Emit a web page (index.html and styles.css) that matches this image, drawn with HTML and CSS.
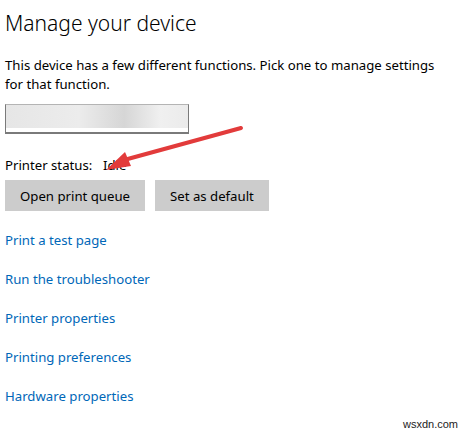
FILE: index.html
```html
<!DOCTYPE html>
<html>
<head>
<meta charset="utf-8">
<link rel="stylesheet" href="styles.css">
</head>
<body>
<div class="page">
  <h1 class="title">Manage your device</h1>
  <p class="desc">This device has a few different functions. Pick one to manage settings for that function.</p>
  <div class="combo"><div class="combo-fill"></div></div>
  <div class="status"><span class="status-label">Printer status:</span><span class="status-value">Idle</span></div>
  <div class="buttons">
    <button class="btn">Open print queue</button>
    <button class="btn">Set as default</button>
  </div>
  <ul class="links">
    <li class="link-item"><a class="link">Print a test page</a></li>
    <li class="link-item"><a class="link">Run the troubleshooter</a></li>
    <li class="link-item"><a class="link">Printer properties</a></li>
    <li class="link-item"><a class="link">Printing preferences</a></li>
    <li class="link-item"><a class="link">Hardware properties</a></li>
  </ul>
  <div class="watermark">wsxdn.com</div>
  <svg class="arrow" width="470" height="440" viewBox="0 0 470 440">
    <line x1="241" y1="128" x2="124" y2="160" stroke="#e23b3b" stroke-width="4" stroke-linecap="round"/>
    <polygon points="106,170 125,152 131,166" fill="#e23b3b"/>
  </svg>
</div>
</body>
</html>
```
FILE: styles.css
```css
html, body { margin: 0; padding: 0; background: #fff; }
.page {
  position: relative;
  width: 470px;
  height: 440px;
  font-family: "Noto Sans", "Open Sans", sans-serif;
  color: #000;
  padding: 0 5px;
  box-sizing: border-box;
}
.title {
  margin: 0;
  padding-top: 9px;
  font-size: 21px;
  font-weight: 300;
  line-height: 28px;
}
.desc {
  margin: 19px 0 0;
  font-size: 13.2px;
  line-height: 19px;
  width: 440px;
}
.combo {
  margin-top: 10px;
  width: 184px;
  height: 30px;
  box-sizing: border-box;
  border: 1px solid #7a7a7a;
  border-top-color: #b4b4b4;
  border-bottom-width: 2px;
  background: #fff;
}
.combo-fill {
  height: 23px;
  background: linear-gradient(90deg, #e6e6e6 0%, #ececec 40%, #d6d6d6 65%, #f0f0f0 85%, #ebebeb 100%);
}
.status {
  margin-top: 22px;
  font-size: 13.2px;
  line-height: 19px;
  display: flex;
}
.status-label { width: 98px; }
.buttons {
  margin-top: 5px;
  display: flex;
  gap: 10px;
}
.btn {
  height: 31px;
  padding: 0 15px;
  border: 0;
  background: #cccccc;
  font-family: inherit;
  font-size: 13.2px;
  color: #000;
}
.links {
  list-style: none;
  margin: 20px 0 0;
  padding: 0;
  display: flex;
  flex-direction: column;
  gap: 20px;
}
.link-item {
  font-size: 13.2px;
  line-height: 19px;
}
.link {
  color: #0067b8;
}
.watermark {
  position: absolute;
  right: 12px;
  bottom: 10px;
  font-family: "Liberation Sans", sans-serif;
  font-size: 11px;
  color: #222;
}
.arrow {
  position: absolute;
  left: 0;
  top: 0;
  pointer-events: none;
}
```
